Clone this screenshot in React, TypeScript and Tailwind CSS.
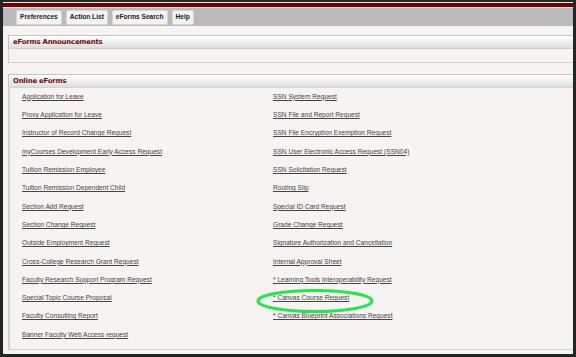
const left = [
  "Application for Leave",
  "Proxy Application for Leave",
  "Instructor of Record Change Request",
  "myCourses Development Early Access Request",
  "Tuition Remission Employee",
  "Tuition Remission Dependent Child",
  "Section Add Request",
  "Section Change Request",
  "Outside Employment Request",
  "Cross-College Research Grant Request",
  "Faculty Research Support Program Request",
  "Special Topic Course Proposal",
  "Faculty Consulting Report",
  "Banner Faculty Web Access request",
];

const right = [
  "SSN System Request",
  "SSN File and Report Request",
  "SSN File Encryption Exemption Request",
  "SSN User Electronic Access Request (SSN04)",
  "SSN Solicitation Request",
  "Routing Slip",
  "Special ID Card Request",
  "Grade Change Request",
  "Signature Authorization and Cancellation",
  "Internal Approval Sheet",
  "* Learning Tools Interoperability Request",
  "* Canvas Course Request",
  "* Canvas Blueprint Associations Request",
];

function Btn({ label }: { label: string }) {
  return (
    <div className="h-[15px] px-[3px] flex items-center bg-[#f3f3f3] border border-[#d6d6d6] rounded-[2px] text-[6.6px] font-bold text-[#222]">
      {label}
    </div>
  );
}

function PanelHead({ title }: { title: string }) {
  return (
    <div className="h-[13px] border-t border-l border-[#c4c4c4] bg-gradient-to-b from-white to-[#dedede] flex items-center pl-[4px] text-[6.9px] font-bold text-[#6a0a0a] [font-family:'DejaVu_Sans',sans-serif] tracking-[-0.2px]">
      {title}
    </div>
  );
}

function Col({ items }: { items: string[] }) {
  return (
    <div className="flex flex-col">
      {items.map((t) => (
        <div key={t} className="h-[18.3px] flex items-center">
          <span className="text-[6.6px] underline text-[#444] leading-none">{t}</span>
        </div>
      ))}
    </div>
  );
}

export default function App() {
  return (
    <div className="w-[576px] h-[357px] bg-[#232623] pt-[2px] pl-[3px] pr-[3px] pb-[3px] [font-family:'Liberation_Sans',Arial,sans-serif]">
      <div className="relative w-full h-full bg-[#f7f3f2] flex flex-col overflow-hidden">
        <div className="h-[1px] bg-[#f0f0f0]" />
        <div className="h-[4px] bg-[#6e0202]" />
        <div className="h-[1px] bg-[#d8d8d8]" />
        <div className="h-[18px] bg-[#bababa] flex items-center gap-[4px] pl-[13px]">
          <Btn label="Preferences" />
          <Btn label="Action List" />
          <Btn label="eForms Search" />
          <Btn label="Help" />
        </div>

        <div className="pl-[5px] pt-[9px]">
          <PanelHead title="eForms Announcements" />
          <div className="h-[15px] border-l border-t border-b border-[#cfcfcf] bg-[#f7f3f2]" />
        </div>

        <div className="pl-[5px] pt-[11px] flex-1 flex flex-col">
          <PanelHead title="Online eForms" />
          <div className="flex-1 mb-[4px] border-l-[2px] border-b border-t border-[#d2d2d2] bg-[#f7f3f2] pl-[12px] grid grid-cols-[251px_1fr]">
            <Col items={left} />
            <Col items={right} />
          </div>
        </div>

        <svg className="absolute left-[252px] top-[286px]" width="120" height="26" viewBox="0 0 120 26">
          <ellipse cx="60" cy="13" rx="57" ry="10.5" fill="none" stroke="#22e64a" strokeWidth="3" />
        </svg>
      </div>
    </div>
  );
}
